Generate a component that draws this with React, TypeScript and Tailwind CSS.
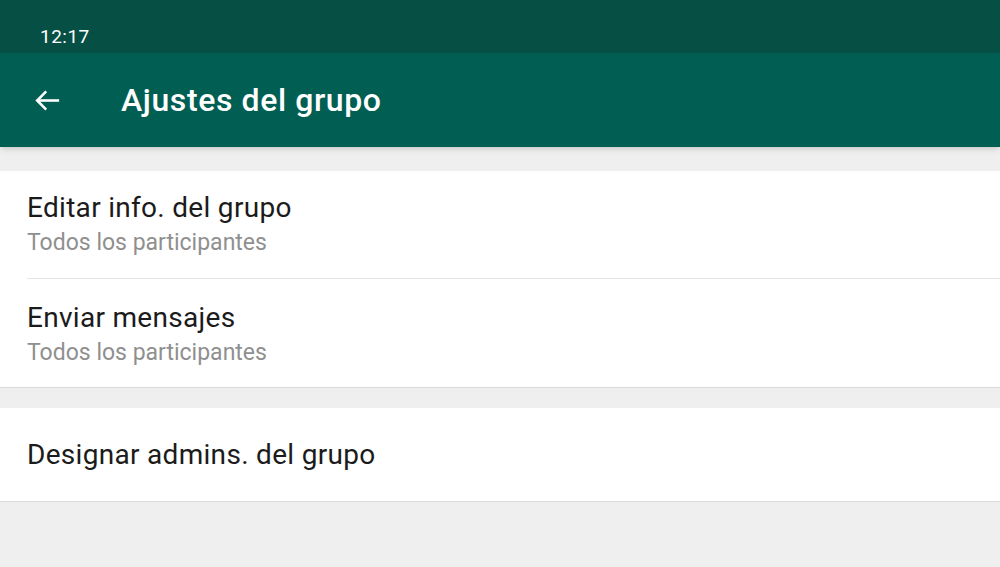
export default function App() {
  return (
    <div className="w-[1000px] h-[567px] bg-[#efefef] flex flex-col overflow-hidden" style={{ fontFamily: 'Roboto, "Noto Sans", sans-serif' }}>
      <div className="h-[53px] bg-[#054f45] flex items-end px-[40px] pb-[7px]">
        <span className="text-white text-[19px] leading-none tracking-wide">12:17</span>
      </div>
      <div className="h-[94px] bg-[#005e52] flex items-center shadow-md">
        <div className="w-[121px] flex items-center pl-[32px]">
          <svg width="31" height="31" viewBox="0 0 24 24" fill="none" stroke="white" strokeWidth="2" strokeLinecap="square">
            <path d="M20 12H5" />
            <path d="M11 5l-7 7 7 7" strokeLinecap="butt" />
          </svg>
        </div>
        <h1 className="text-white text-[32px] font-medium tracking-[0.6px]">Ajustes del grupo</h1>
      </div>
      <div className="h-[24px]" />
      <div className="bg-white border-b border-[#d9d9d9]">
        <div className="h-[107px] flex flex-col justify-center px-[27px] pt-[2px]">
          <div className="text-[28px] text-[#1b1b1b] leading-[34px] tracking-[0.3px]">Editar info. del grupo</div>
          <div className="text-[23px] text-[#8f8f8f] leading-[34px] mt-[1px]">Todos los participantes</div>
        </div>
        <div className="ml-[27px] border-t border-[#e4e4e4]" />
        <div className="h-[108px] flex flex-col justify-center px-[27px] pt-[4px]">
          <div className="text-[28px] text-[#1b1b1b] leading-[34px] tracking-[0.3px]">Enviar mensajes</div>
          <div className="text-[23px] text-[#8f8f8f] leading-[34px] mt-[1px]">Todos los participantes</div>
        </div>
      </div>
      <div className="h-[20px]" />
      <div className="bg-white border-b border-[#d9d9d9] h-[94px] flex items-center px-[27px]">
        <div className="text-[28px] text-[#1b1b1b] tracking-[0.3px]">Designar admins. del grupo</div>
      </div>
    </div>
  );
}
